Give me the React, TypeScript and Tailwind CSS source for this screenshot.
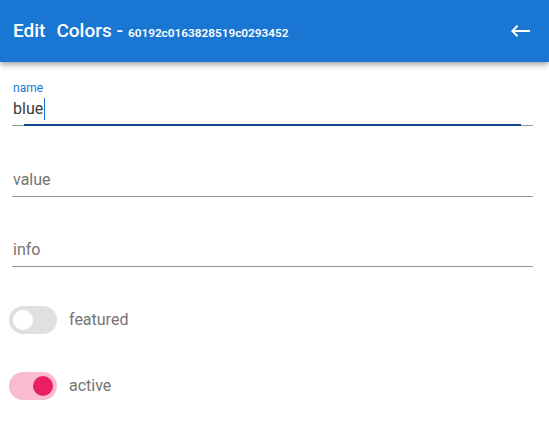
import React from 'react';

// --- Switch ---
const Toggle = ({ on, label }: { on: boolean; label: string }) => (
    <div className="flex items-center h-[28px] pl-[9px]">
        <div className={on ? "relative w-[48px] h-[28px] rounded-full bg-[#f8bbd0]" : "relative w-[48px] h-[28px] rounded-full bg-[#e0e0e0]"}>
            <div className={on ? "absolute top-[4px] left-[24px] w-[20px] h-[20px] rounded-full bg-[#e91e63]" : "absolute top-[4px] left-[4px] w-[20px] h-[20px] rounded-full bg-white"} />
        </div>
        <span className="ml-[12px] text-base leading-6 text-[#757575]">{label}</span>
    </div>
);

// --- Plain text field ---
const Field = ({ placeholder }: { placeholder: string }) => (
    <div className="ml-[12px] mr-[16px] border-b border-[#949494]">
        <div className="pl-px pb-1 text-base leading-6 text-[#757575]">{placeholder}</div>
    </div>
);

export default function App() {
    return (
        <div className="w-[549px] h-[434px] bg-white overflow-hidden" style={{ fontFamily: 'Roboto, "Liberation Sans", sans-serif' }}>
            {/* Toolbar */}
            <div className="relative z-10 h-[62px] bg-[#1976d2] flex items-center justify-between pl-[13px] pr-[18px] shadow-[0_2px_4px_-1px_rgba(0,0,0,0.2),0_4px_5px_0_rgba(0,0,0,0.14),0_1px_10px_0_rgba(0,0,0,0.12)]">
                <div className="flex items-baseline text-white pt-px">
                    <span className="text-[19px] font-medium">Edit</span>
                    <span className="ml-[11px] text-[19px] font-medium">Colors -</span>
                    <span className="ml-[5px] text-[11.8px] font-semibold">60192c0163828519c0293452</span>
                </div>
                <svg width="20" height="12" viewBox="0 0 20 12" className="text-white">
                    <path d="M1 6H19M6.5 0.8L1.3 6L6.5 11.2" fill="none" stroke="currentColor" strokeWidth="2" />
                </svg>
            </div>

            {/* Form */}
            <div className="flex flex-col">
                {/* name (focused) */}
                <div className="relative ml-[12px] mr-[16px] mt-[18px] border-b border-[#949494]">
                    <div className="pl-px text-xs leading-4 text-[#1976d2]">name</div>
                    <div className="mt-px pl-px pb-1 text-base leading-6 text-[#3c3c3c] flex items-center">
                        blue<span className="ml-px w-px h-[22px] bg-[#1976d2]" />
                    </div>
                    <div className="absolute left-[12px] right-[12px] -bottom-px h-[2px] bg-[#0f4a8c]" />
                </div>

                <div className="mt-[42px]">
                    <Field placeholder="value" />
                </div>
                <div className="mt-[41px]">
                    <Field placeholder="info" />
                </div>

                <div className="mt-[39px]">
                    <Toggle on={false} label="featured" />
                </div>
                <div className="mt-[38px]">
                    <Toggle on={true} label="active" />
                </div>
            </div>
        </div>
    );
}
